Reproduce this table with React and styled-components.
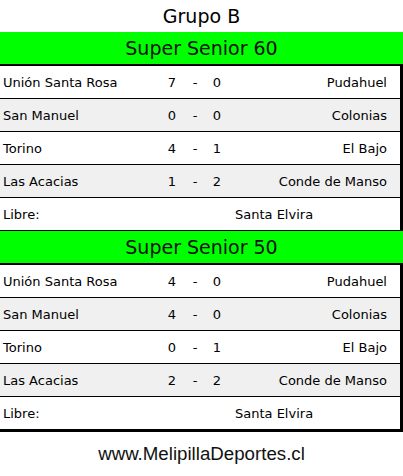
import React from 'react'
import styled, { createGlobalStyle } from 'styled-components'

const GlobalStyle = createGlobalStyle`
  body {
    margin: 0;
    background: #fff;
    font-family: "DejaVu Sans", Verdana, sans-serif;
    color: #000;
  }
`

const Page = styled.div`
  width: 403px;
  display: flex;
  flex-direction: column;
`

const Title = styled.div`
  height: 32px;
  line-height: 32px;
  text-align: center;
  font-size: 19px;
`

const Header = styled.div`
  height: 32px;
  line-height: 32px;
  background: #00ff00;
  text-align: center;
  font-size: 19px;
  color: #111;
  border-bottom: 2px solid #000;
`

const Row = styled.div`
  display: grid;
  grid-template-columns: 163px 18px 28px 16px 1fr;
  align-items: center;
  height: 32px;
  font-size: 13px;
  background: ${(p) => (p.$shaded ? '#f0f0f0' : '#fff')};
  border-bottom: ${(p) => (p.$last ? '3px' : '1px')} solid #000;
  border-right: 3px solid #000;
  box-sizing: content-box;
  width: 400px;
`

const FreeRow = styled(Row)`
  grid-template-columns: 235px 1fr;
`

const Home = styled.span`
  padding-left: 3px;
`

const Score = styled.span`
  text-align: center;
`

const Away = styled.span`
  text-align: right;
  padding-right: 13px;
`

const Footer = styled.div`
  height: 44px;
  display: flex;
  align-items: center;
  justify-content: center;
  font-family: "Liberation Sans", Arial, sans-serif;
  font-size: 18.7px;
  color: #111;
`

const groups = [
  {
    name: 'Super Senior 60',
    matches: [
      ['Unión Santa Rosa', 7, 0, 'Pudahuel'],
      ['San Manuel', 0, 0, 'Colonias'],
      ['Torino', 4, 1, 'El Bajo'],
      ['Las Acacias', 1, 2, 'Conde de Manso'],
    ],
    free: 'Santa Elvira',
  },
  {
    name: 'Super Senior 50',
    matches: [
      ['Unión Santa Rosa', 4, 0, 'Pudahuel'],
      ['San Manuel', 4, 0, 'Colonias'],
      ['Torino', 0, 1, 'El Bajo'],
      ['Las Acacias', 2, 2, 'Conde de Manso'],
    ],
    free: 'Santa Elvira',
  },
]

export default function App() {
  return (
    <Page>
      <GlobalStyle />
      <Title>Grupo B</Title>
      {groups.map((g, gi) => (
        <div key={g.name}>
          <Header>{g.name}</Header>
          {g.matches.map((m, i) => (
            <Row key={i} $shaded={i % 2 === 1}>
              <Home>{m[0]}</Home>
              <Score>{m[1]}</Score>
              <Score>-</Score>
              <Score>{m[2]}</Score>
              <Away>{m[3]}</Away>
            </Row>
          ))}
          <FreeRow $last={gi === groups.length - 1}>
            <Home>Libre:</Home>
            <span>{g.free}</span>
          </FreeRow>
        </div>
      ))}
      <Footer>www.MelipillaDeportes.cl</Footer>
    </Page>
  )
}
